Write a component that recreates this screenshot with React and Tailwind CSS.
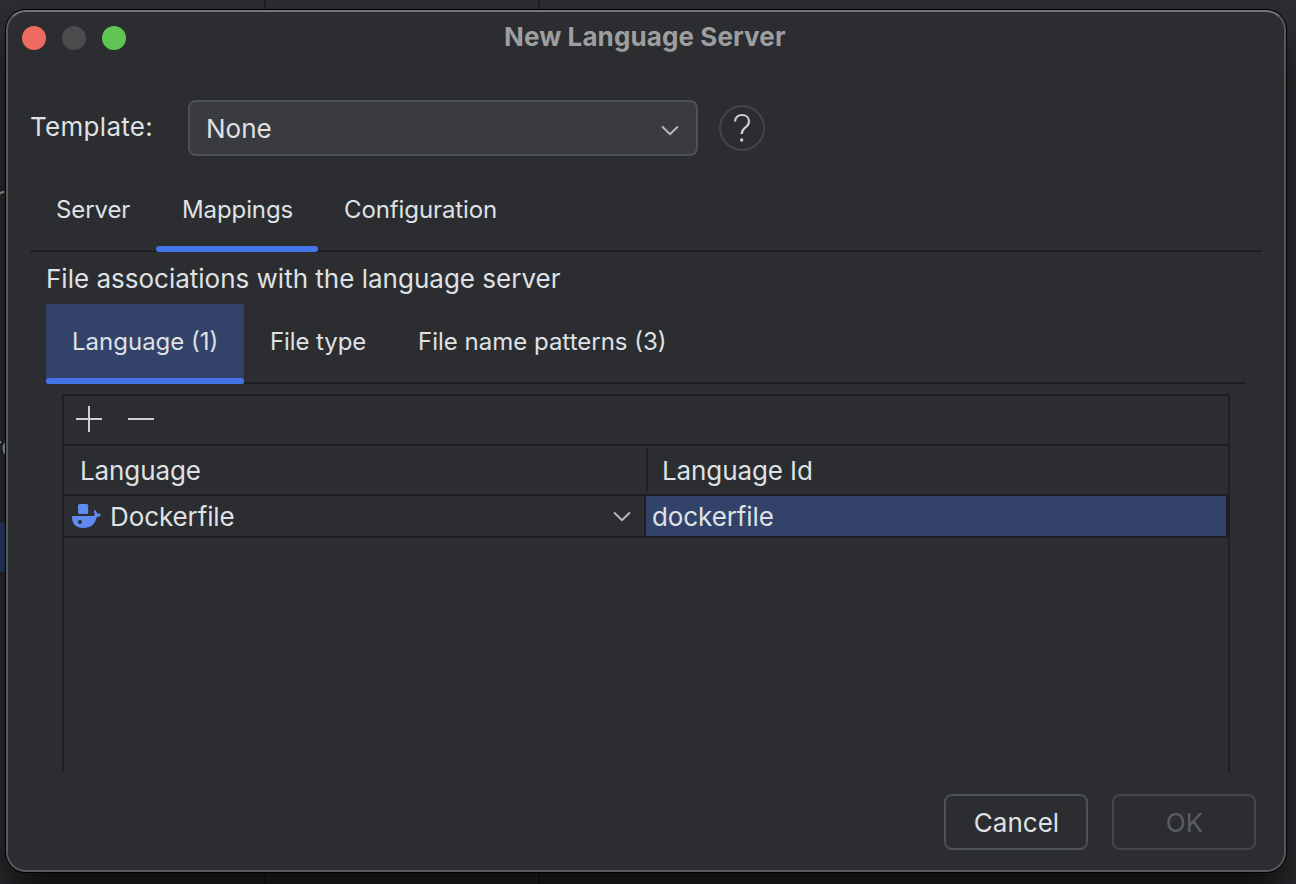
import React from "react";

function Chevron({ className }) {
  return (
    <svg viewBox="0 0 18 12" className={className} fill="none" stroke="#b9bbc0" strokeWidth="1.9">
      <path d="M1.6 2 L9 9.2 L16.4 2" strokeLinecap="round" strokeLinejoin="miter" />
    </svg>
  );
}

function DockerIcon() {
  return (
    <svg viewBox="0 0 30 26" className="h-[26px] w-[30px] shrink-0" fill="#5f8bee">
      <rect x="6" y="1" width="10.2" height="10" rx="1.6" />
      <path
        fillRule="evenodd"
        d="M1.2 13 H18.8 C21.4 13 22.8 12.4 23 11.4 C21.7 10.2 21.6 8.4 22.5 7 C24 7.6 25 9 25.2 10.8 C26.6 10.2 28 10.4 29 11.2 C28.4 13 26.6 14.2 24.6 14.2 C23.4 21 18.5 25 11.5 25 C4 25 0 21 0 14.2 C0 13.5 .5 13 1.2 13 Z M8 17 A2 2 0 1 0 8 21 A2 2 0 1 0 8 17 Z"
      />
    </svg>
  );
}

function TitleBar() {
  return (
    <div className="flex h-[52px] items-center gap-4 pl-[14px]">
      <span className="size-6 rounded-full bg-[#ed6b60]" />
      <span className="size-6 rounded-full bg-[#4a4b4d]" />
      <span className="size-6 rounded-full bg-[#61c554]" />
      <span className="-mt-[2px] ml-[362px] text-[26px] font-bold tracking-[0.1px] text-[#9d9ea0]">New Language Server</span>
    </div>
  );
}

function TemplateRow() {
  return (
    <div className="mt-9 flex h-14 items-center pl-[22px]">
      <span className="-mt-[2px] w-[158px] tracking-[0.3px]">Template:</span>
      <div className="flex h-14 w-[510px] items-center justify-between rounded-[8px] border-2 border-[#4e5157] bg-[#393b40] pl-4 pr-[17px]">
        <span className="mt-[2px]">None</span>
        <Chevron className="mt-[5px] h-3 w-[18px]" />
      </div>
      <div className="ml-[21px] flex size-[46px] items-center justify-center rounded-full border-2 border-[#43454a]">
        <svg viewBox="0 0 18 30" className="h-[30px] w-[18px]" fill="none">
          <path
            d="M2 8.6 C2 4.4 5 2 9 2 C13 2 16 4.5 16 8.4 C16 11.6 14 13.2 11.8 15 C9.7 16.8 8.7 18 8.7 21"
            stroke="#ced0d6"
            strokeWidth="2.2"
          />
          <circle cx="8.7" cy="27" r="1.7" fill="#ced0d6" />
        </svg>
      </div>
    </div>
  );
}

function Underline() {
  return <span className="absolute inset-x-0 bottom-0 h-[6px] rounded-[3px] bg-[#4573e8]" />;
}

function MainTabs() {
  return (
    <div className="ml-[22px] mt-3 flex h-[84px] w-[1232px] border-b-2 border-[#1e1f22] text-[24px] tracking-[-0.1px]">
      <div className="h-[84px] w-[126px] pl-[26px] pt-[26px]">Server</div>
      <div className="relative h-[84px] w-[162px] pl-[26px] pt-[26px]">
        Mappings
        <Underline />
      </div>
      <div className="h-[84px] pl-[26px] pt-[26px]">Configuration</div>
    </div>
  );
}

function MappingTabs() {
  return (
    <div className="ml-[38px] flex h-20 w-[1200px] border-b-2 border-[#1e1f22] text-[24px]">
      <div className="relative h-20 w-[198px] bg-[#334269] pl-[26px] pt-[22px]">
        Language (1)
        <Underline />
      </div>
      <div className="h-20 w-[148px] pl-[26px] pt-[22px] tracking-[-0.1px]">File type</div>
      <div className="h-20 pl-[26px] pt-[22px]">File name patterns (3)</div>
    </div>
  );
}

function MappingTable() {
  return (
    <div className="ml-[54px] mt-[10px] h-[378px] w-[1168px] border-x-2 border-t-2 border-[#1e1f22]">
      <div className="flex h-[50px] items-center gap-[26px] border-b-2 border-[#1e1f22] pl-3">
        <svg viewBox="0 0 26 26" className="mt-[-2px] size-[26px]" stroke="#ced0d6" strokeWidth="2">
          <path d="M13 0 V26 M0 13 H26" />
        </svg>
        <svg viewBox="0 0 26 26" className="mt-[-2px] size-[26px]" stroke="#ced0d6" strokeWidth="2">
          <path d="M0 13 H26" />
        </svg>
      </div>
      <div className="flex h-[50px] items-center border-b-2 border-[#1e1f22] tracking-[-0.1px]">
        <div className="flex h-11 w-[584px] items-center border-r-2 border-[#1e1f22] pl-4 pt-[2px]">Language</div>
        <div className="pl-[14px] pt-[2px]">Language Id</div>
      </div>
      <div className="flex h-[42px] border-b-2 border-[#1e1f22] tracking-[-0.1px]">
        <div className="flex w-[582px] items-center border-r-2 border-[#1e1f22] pl-2 pr-[13px]">
          <DockerIcon />
          <span className="ml-2 grow pt-[2px]">Dockerfile</span>
          <Chevron className="mt-[1px] h-3 w-[18px]" />
        </div>
        <div className="flex w-[582px] items-center border-r-2 border-[#1e1f22] bg-[#334269] pl-[6px] pt-[2px]">dockerfile</div>
      </div>
    </div>
  );
}

export default function App() {
  return (
    <div
      className="relative h-[884px] w-[1296px] overflow-hidden whitespace-nowrap bg-[#2b2d30] pl-[6px] pt-[10px] text-[26px] leading-8 text-[#dfe1e5] antialiased"
      style={{ fontFamily: 'Inter, "Liberation Sans", sans-serif' }}
    >
      <span className="absolute left-[264px] top-0 h-full w-[2px] bg-[#1e1f22]" />
      <span className="absolute left-[538px] top-0 h-full w-[2px] bg-[#1e1f22]" />
      <span className="absolute left-[-5px] top-[181px] text-[#b0b1b3]">r</span>
      <span className="absolute left-[-8px] top-[431px] text-[#b0b1b3]">ro</span>
      <span className="absolute left-0 top-[522px] h-[50px] w-[6px] bg-[#2e436e]" />
      <div className="relative h-[862px] w-[1280px] rounded-[20px] border-2 border-[#58595b] border-t-[#747577] bg-[#2b2d30] shadow-[0_0_0_1px_#000,0_30px_44px_rgba(0,0,0,0.7)]">
        <TitleBar />
        <TemplateRow />
        <MainTabs />
        <div className="ml-[38px] mt-[10px] h-[42px] pt-[1px]">File associations with the language server</div>
        <MappingTabs />
        <MappingTable />
        <div className="mt-[22px] flex justify-end gap-6 pr-7">
          <button className="flex h-14 w-36 items-center justify-center rounded-[8px] border-2 border-[#4e5157] pl-px pt-[2px]">Cancel</button>
          <button className="flex h-14 w-36 items-center justify-center rounded-[8px] border-2 border-[#43454a] pl-px pt-[2px] text-[#5a5d63]">OK</button>
        </div>
      </div>
    </div>
  );
}
